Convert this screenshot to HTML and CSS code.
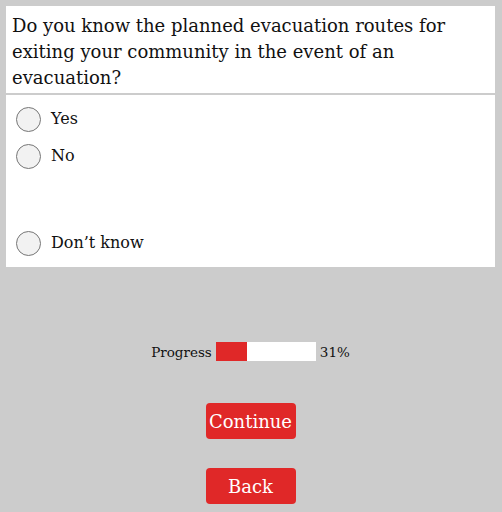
FILE: index.html
```html
<!DOCTYPE html>
<html>
<head>
<meta charset="utf-8">
<link rel="stylesheet" href="styles.css">
</head>
<body>
<div class="page">
  <div class="question">Do you know the planned evacuation routes for exiting your community in the event of an evacuation?</div>
  <div class="options">
    <label class="option"><span class="radio"></span><span class="label">Yes</span></label>
    <label class="option"><span class="radio"></span><span class="label">No</span></label>
    <div class="spacer"></div>
    <label class="option"><span class="radio"></span><span class="label">Don’t know</span></label>
  </div>
  <div class="progress">
    <span class="ptext">Progress</span>
    <span class="bar"><span class="fill" style="width:31%"></span></span>
    <span class="ptext">31%</span>
  </div>
  <div class="buttons">
    <button class="btn">Continue</button>
    <button class="btn">Back</button>
  </div>
</div>
</body>
</html>
```
FILE: styles.css
```css
html, body {
  margin: 0;
  padding: 0;
  background: #cccccc;
}
body {
  font-family: "DejaVu Serif", "Liberation Serif", serif;
  color: #111;
}
.page {
  padding: 6px 7px 0 6px;
}
.question {
  background: #fff;
  font-size: 18px;
  line-height: 26px;
  padding: 7px 6px 2px 6px;
  margin-bottom: 2px;
}
.options {
  background: #fff;
  padding: 11px 10px 11px 10px;
  display: flex;
  flex-direction: column;
  gap: 11px;
}
.option {
  display: flex;
  align-items: center;
  gap: 10px;
  height: 26px;
}
.spacer {
  height: 39px;
}
.radio {
  width: 23px;
  height: 23px;
  border: 1.5px solid #767676;
  border-radius: 50%;
  background: #f2f2f2;
  flex: none;
}
.label {
  font-size: 16px;
  position: relative;
  top: -1px;
}
.progress {
  margin-top: 75px;
  display: flex;
  justify-content: center;
  align-items: center;
  gap: 4px;
  font-size: 13.5px;
}
.bar {
  display: block;
  width: 100px;
  height: 19px;
  background: #fff;
}
.fill {
  display: block;
  height: 100%;
  background: #e02828;
}
.buttons {
  display: flex;
  flex-direction: column;
  align-items: center;
  gap: 29px;
  margin-top: 42px;
}
.btn {
  font-family: "DejaVu Serif", "Liberation Serif", serif;
  font-size: 18px;
  color: #fff;
  background: #e02828;
  border: none;
  border-radius: 4px;
  width: 90px;
  height: 36px;
  padding: 0;
}
```
